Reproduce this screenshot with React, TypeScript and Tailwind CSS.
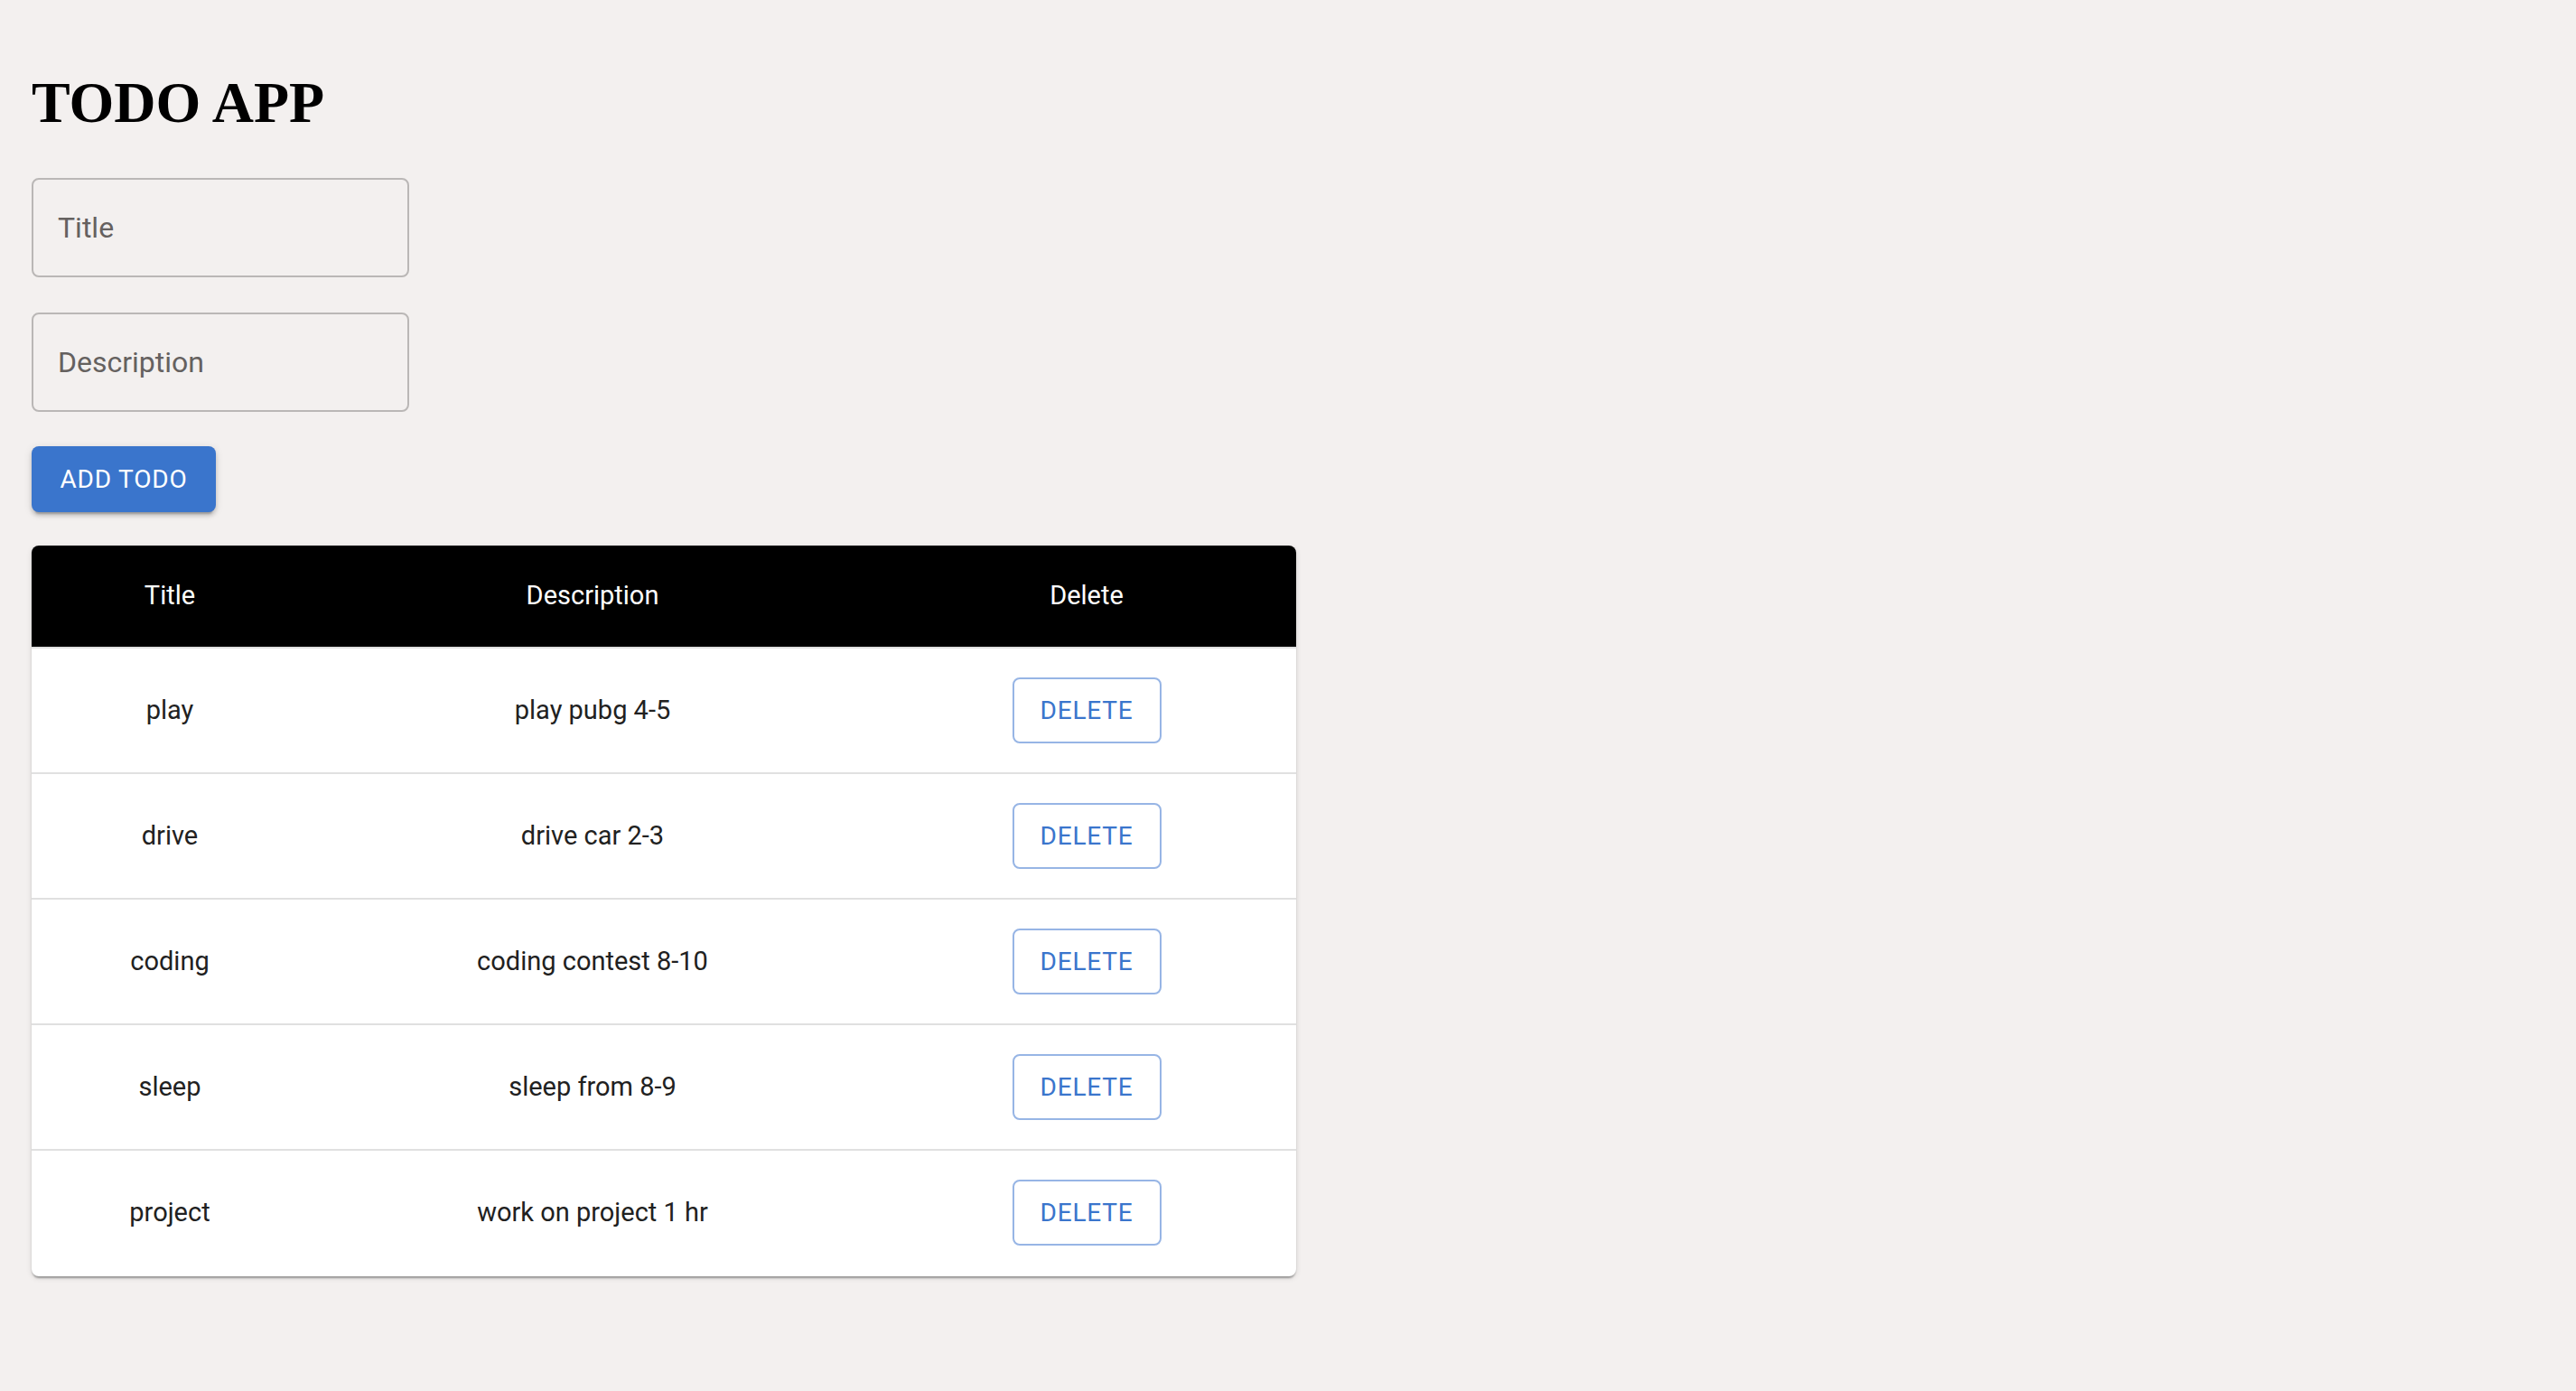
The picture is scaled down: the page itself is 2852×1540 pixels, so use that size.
import React from "react";

const todos = [
  { title: "play", description: "play pubg 4-5" },
  { title: "drive", description: "drive car 2-3" },
  { title: "coding", description: "coding contest 8-10" },
  { title: "sleep", description: "sleep from 8-9" },
  { title: "project", description: "work on project 1 hr" },
];

export default function App() {
  return (
    <div
      className="min-h-screen w-full bg-[#f3f0ef] pl-[35px] pt-[78px] pb-[40px]"
      style={{ fontFamily: "Roboto, 'Liberation Sans', sans-serif" }}
    >
      <h1
        className="text-[64px] leading-[72px] font-bold text-black"
        style={{ fontFamily: "'Liberation Serif', 'Times New Roman', serif" }}
      >
        TODO APP
      </h1>

      <div className="mt-[47px] flex flex-col items-start">
        <input
          placeholder="Title"
          className="w-[418px] h-[110px] rounded-[8px] border-2 border-[#bab7b6] bg-transparent pl-[27px] text-[32px] text-[#212121] placeholder:text-[#65615f] outline-none"
        />
        <input
          placeholder="Description"
          className="mt-[39px] w-[418px] h-[110px] rounded-[8px] border-2 border-[#bab7b6] bg-transparent pl-[27px] text-[32px] text-[#212121] placeholder:text-[#65615f] outline-none"
        />
        <button className="mt-[38px] w-[204px] h-[73px] rounded-[8px] bg-[#3a75cc] text-white text-[28px] font-normal tracking-[0.8px] uppercase shadow-[0_6px_2px_-4px_rgba(0,0,0,0.2),0_4px_4px_0_rgba(0,0,0,0.14),0_2px_10px_0_rgba(0,0,0,0.12)]">
          ADD TODO
        </button>
      </div>

      <div className="mt-[37px] w-[1400px] rounded-[8px] bg-white overflow-hidden shadow-[0_4px_2px_-2px_rgba(0,0,0,0.2),0_2px_2px_0_rgba(0,0,0,0.14),0_2px_6px_0_rgba(0,0,0,0.12)]">
        <div className="grid grid-cols-[306px_630px_464px] bg-black border-b-2 border-[#e0e0e0]">
          <div className="h-[112px] flex items-center justify-center text-white text-[29px] font-normal">Title</div>
          <div className="h-[112px] flex items-center justify-center text-white text-[29px] font-normal">Description</div>
          <div className="h-[112px] flex items-center justify-center text-white text-[29px] font-normal">Delete</div>
        </div>
        {todos.map((t, i) => (
          <div
            key={t.title}
            className={
              i < todos.length - 1
                ? "grid grid-cols-[306px_630px_464px] border-b-2 border-[#e0e0e0]"
                : "grid grid-cols-[306px_630px_464px] border-b-2 border-transparent"
            }
          >
            <div className="h-[137px] flex items-center justify-center text-[29px] text-[#212121]">{t.title}</div>
            <div className="h-[137px] flex items-center justify-center text-[29px] text-[#212121]">{t.description}</div>
            <div className="h-[137px] flex items-center justify-center">
              <button className="w-[165px] h-[73px] rounded-[8px] border-2 border-[#97b5e5] bg-white text-[#3a75cc] text-[28px] font-normal tracking-[0.8px]">
                DELETE
              </button>
            </div>
          </div>
        ))}
      </div>
    </div>
  );
}
